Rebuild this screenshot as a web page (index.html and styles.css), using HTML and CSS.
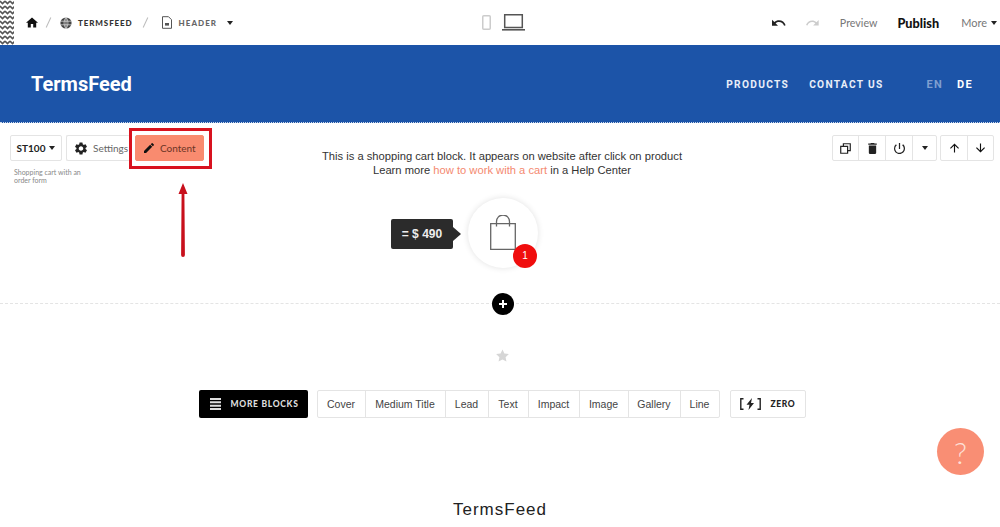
FILE: index.html
```html
<!DOCTYPE html>
<html lang="en">
<head>
    <meta charset="UTF-8">
    <title>TermsFeed - Header</title>
    <link rel="stylesheet" href="styles.css">
</head>
<body>
    <header class="topbar">
        <svg class="zigzag" width="14" height="45">
            <defs>
                <pattern id="zig" width="5" height="5" patternUnits="userSpaceOnUse">
                    <path d="M0 1l2.5 2.5L5 1" fill="none" stroke="#555" stroke-width="1.6"/>
                </pattern>
            </defs>
            <rect width="14" height="45" fill="url(#zig)"/>
        </svg>
        <nav class="crumbs">
            <svg class="ico-home" viewBox="2 3 20 17"><path d="M10 20v-6h4v6h5v-8h3L12 3 2 12h3v8z"/></svg>
            <span class="slash"></span>
            <svg class="ico-globe" viewBox="0 0 12 12">
                <circle cx="6" cy="6" r="5.6" fill="#444"/>
                <path d="M.5 4.2h11M.5 7.8h11M6 .5v11M6 .5C3.4 3.5 3.4 8.5 6 11.5M6 .5c2.6 3 2.6 8 0 11" fill="none" stroke="#fff" stroke-width=".6"/>
            </svg>
            <span class="crumb-text crumb-site">TERMSFEED</span>
            <span class="slash slash-second"></span>
            <svg class="ico-doc" viewBox="0 0 12 13">
                <path d="M1.5.7h6l3 3v8.6h-9z" fill="none" stroke="#555" stroke-width="1"/>
                <path d="M4 7h4v2.6H4z" fill="#555"/>
            </svg>
            <span class="crumb-text crumb-page">HEADER</span>
            <span class="caret caret-page"></span>
        </nav>
        <div class="devices">
            <svg width="9" height="15" viewBox="0 0 9 15"><rect x=".75" y=".75" width="7.5" height="13.5" rx="1" fill="none" stroke="#ccc" stroke-width="1.5"/></svg>
            <svg width="23" height="17" viewBox="0 0 23 17"><path d="M2.7.8h17.6v12.7H2.7z" fill="none" stroke="#555" stroke-width="1.5"/><path d="M0 15h23v1.6H0z" fill="#555"/></svg>
        </div>
        <div class="actions">
            <svg class="ico-undo" viewBox="2 7 21 10"><path d="M12.5 8c-2.65 0-5.05.99-6.9 2.6L2 7v9h9l-3.62-3.62c1.39-1.16 3.16-1.88 5.12-1.88 3.54 0 6.55 2.31 7.6 5.5l2.37-.78C21.08 11.03 17.15 8 12.5 8z"/></svg>
            <svg class="ico-redo" viewBox="1.5 7 21 10"><path d="M18.4 10.6C16.55 8.99 14.15 8 11.5 8c-4.65 0-8.58 3.03-9.96 7.22L3.9 16c1.05-3.19 4.05-5.5 7.6-5.5 1.95 0 3.73.72 5.12 1.88L13 16h9V7l-3.6 3.6z"/></svg>
            <span class="action-preview">Preview</span>
            <span class="action-publish">Publish</span>
            <span class="action-more">More</span>
            <span class="caret"></span>
        </div>
    </header>

    <section class="hero">
        <div class="logo">TermsFeed</div>
        <nav class="hero-nav">
            <a>PRODUCTS</a>
            <a>CONTACT US</a>
        </nav>
        <div class="langs">
            <span class="lang-off">EN</span>
            <span>DE</span>
        </div>
    </section>

    <section class="block">
        <div class="block-left">
            <div class="block-tools">
                <button class="btn btn-code">ST100 <span class="caret"></span></button>
                <button class="btn btn-settings">
                    <svg class="ico-gear" viewBox="2.5 2 19 20"><path d="M19.14 12.94c.04-.3.06-.61.06-.94 0-.32-.02-.64-.07-.94l2.03-1.58a.49.49 0 0 0 .12-.61l-1.92-3.32a.488.488 0 0 0-.59-.22l-2.39.96c-.5-.38-1.03-.7-1.62-.94l-.36-2.54a.484.484 0 0 0-.48-.41h-3.84c-.24 0-.43.17-.47.41l-.36 2.54c-.59.24-1.13.57-1.62.94l-2.39-.96c-.22-.08-.47 0-.59.22L2.74 8.87c-.12.21-.08.47.12.61l2.03 1.58c-.05.3-.09.63-.09.94s.02.64.07.94l-2.03 1.58a.49.49 0 0 0-.12.61l1.92 3.32c.12.22.37.29.59.22l2.39-.96c.5.38 1.03.7 1.62.94l.36 2.54c.05.24.24.41.48.41h3.84c.24 0 .44-.17.47-.41l.36-2.54c.59-.24 1.13-.56 1.62-.94l2.39.96c.22.08.47 0 .59-.22l1.92-3.32c.12-.22.07-.47-.12-.61l-2.01-1.58zM12 15.6c-1.98 0-3.6-1.62-3.6-3.6s1.62-3.6 3.6-3.6 3.6 1.62 3.6 3.6-1.62 3.6-3.6 3.6z"/></svg>
                    Settings
                </button>
                <button class="btn btn-content">
                    <svg class="ico-pencil" viewBox="3 3 18 18"><path d="M3 17.25V21h3.75L17.81 9.94l-3.75-3.75L3 17.25zM20.71 7.04a1 1 0 0 0 0-1.41l-2.34-2.34a1 1 0 0 0-1.41 0l-1.83 1.83 3.75 3.75 1.83-1.83z"/></svg>
                    Content
                </button>
            </div>
            <p class="block-note">Shopping cart with an order form</p>
            <div class="red-box"></div>
            <svg class="red-arrow" width="12" height="74" viewBox="0 0 12 74">
                <path d="M6 0l4.5 11H7.4L7.9 72a1.9 1.9 0 0 1-3.8 0L4.6 11H1.5z" fill="#c8101c"/>
            </svg>
        </div>

        <div class="block-main">
            <p class="cart-text">This is a shopping cart block. It appears on website after click on product<br>
            Learn more <a>how to work with a cart</a> in a Help Center</p>
            <div class="cart">
                <div class="price">= $ 490</div>
                <svg class="bag" width="26" height="35" viewBox="0 0 26 35">
                    <path d="M.7 8.7h24.6v25.6H.7z" fill="none" stroke="#666" stroke-width="1.3"/>
                    <path d="M6.5 11.5V6.5a6 6 0 0 1 13 0v5" fill="none" stroke="#666" stroke-width="1.3"/>
                </svg>
                <div class="badge">1</div>
            </div>
        </div>

        <div class="block-right">
            <div class="tool-group">
                <span class="tool tool-first"><svg class="ico-tool" viewBox="0 0 12 12"><path d="M3.7.8h7.5v7.5H3.7z" fill="none" stroke="#222" stroke-width="1.3"/><path d="M.8 3.7h7.5v7.5H.8z" fill="#fff" stroke="#222" stroke-width="1.3"/></svg></span>
                <span class="tool"><svg class="ico-tool" viewBox="5 3 14 18"><path d="M6 19c0 1.1.9 2 2 2h8c1.1 0 2-.9 2-2V7H6v12zM19 4h-3.5l-1-1h-5l-1 1H5v2h14V4z"/></svg></span>
                <span class="tool"><svg class="ico-tool" viewBox="3 3 18 18"><path d="M13 3h-2v10h2V3zm4.83 2.17-1.42 1.42A6.92 6.92 0 0 1 19 12c0 3.87-3.13 7-7 7A6.995 6.995 0 0 1 7.58 6.58L6.17 5.17A8.932 8.932 0 0 0 3 12c0 4.97 4.03 9 9 9s9-4.03 9-9c0-2.74-1.23-5.18-3.17-6.83z"/></svg></span>
                <span class="tool tool-narrow"><span class="caret"></span></span>
            </div>
            <div class="tool-group">
                <span class="tool tool-move"><svg class="ico-arrow" viewBox="4 4 16 16"><path d="M4 12l1.41 1.41L11 7.83V20h2V7.83l5.58 5.59L20 12l-8-8-8 8z"/></svg></span>
                <span class="tool tool-move"><svg class="ico-arrow ico-down" viewBox="4 4 16 16"><path d="M4 12l1.41 1.41L11 7.83V20h2V7.83l5.58 5.59L20 12l-8-8-8 8z"/></svg></span>
            </div>
        </div>

        <div class="add-block"></div>
    </section>

    <section class="picker">
        <svg class="star" width="13" height="13" viewBox="0 0 24 24"><path d="M12 .8l3.5 7.6 8.3 1-6.1 5.7 1.6 8.2L12 19.2l-7.3 4.1 1.6-8.2L.2 9.4l8.3-1z"/></svg>
        <div class="picker-row">
            <button class="more-blocks">
                <svg width="11" height="12" viewBox="0 0 11 12"><path d="M0 0h11v2H0zM0 3.3h11v2H0zM0 6.7h11v2H0zM0 10h11v2H0z" fill="#ddd"/></svg>
                MORE BLOCKS
            </button>
            <div class="types">
                <span class="type type-cover">Cover</span>
                <span class="type type-medium">Medium Title</span>
                <span class="type type-lead">Lead</span>
                <span class="type type-text">Text</span>
                <span class="type type-impact">Impact</span>
                <span class="type type-image">Image</span>
                <span class="type type-gallery">Gallery</span>
                <span class="type type-line">Line</span>
            </div>
            <button class="zero">
                <svg width="21" height="12" viewBox="0 0 21 12">
                    <path d="M3.5.8H.8v10.4h2.7M17.5.8h2.7v10.4h-2.7" fill="none" stroke="#222" stroke-width="1.4"/>
                    <path d="M12 0L6.5 6.8h3L8.5 12l5.5-7h-3z" fill="#222"/>
                </svg>
                ZERO
            </button>
        </div>
    </section>

    <button class="help">?</button>

    <footer class="footer">TermsFeed</footer>
</body>
</html>
```

FILE: styles.css
```css
* { box-sizing: border-box; }
body { margin: 0; height: 527px; overflow: hidden; background: #fff; font-family: "Liberation Sans", Arial, sans-serif; color: #222; position: relative; }
button { font-family: inherit; cursor: pointer; }
p { margin: 0; }
svg { display: block; flex: none; }

.caret { display: inline-block; width: 0; height: 0; border-left: 3.5px solid transparent; border-right: 3.5px solid transparent; border-top: 4px solid #222; }

/* top bar */
.topbar { height: 45px; display: flex; align-items: center; }
.zigzag { align-self: flex-start; }
.crumbs { display: flex; flex: none; align-items: center; margin-left: 12px; width: 212px; }
.ico-home { width: 12px; height: 11px; fill: #111; }
.slash { flex: none; width: 1px; height: 11px; background: #bbb; transform: rotate(25deg); margin: 0 11px 0 10px; }
.slash-second { margin: 0 15px 0 12px; }
.ico-globe { width: 12px; height: 12px; margin-right: 6px; }
.ico-doc { width: 12px; height: 13px; margin-right: 6px; }
.crumb-text { font-family: "Lato", sans-serif; font-size: 8px; font-weight: 900; letter-spacing: .9px; padding-top: 1px; }
.crumb-site { color: #333; }
.crumb-page { color: #666; letter-spacing: 1.05px; }
.caret-page { margin-left: 10px; }
.devices { display: flex; align-items: center; gap: 11px; margin-left: 244px; }
.actions { display: flex; align-items: center; margin-left: auto; padding-right: 3px; font-family: "Lato", sans-serif; font-size: 10.7px; }
.ico-undo { width: 14px; height: 8px; fill: #222; }
.ico-redo { width: 13px; height: 8px; fill: #ccc; margin-left: 20px; }
.action-preview { color: #777; margin-left: 21px; }
.action-publish { color: #111; font-size: 12.7px; font-weight: 900; margin-left: 20px; }
.action-more { color: #777; font-size: 11px; margin-left: 22px; margin-right: 4px; }

/* blue header of the page */
.hero { height: 78px; background: #1c54a8; color: #fff; display: flex; align-items: center; padding: 1px 27px 0 31px; border-bottom: 1px dotted #cdd9ec; }
.logo { font-family: "Roboto", sans-serif; font-size: 20px; font-weight: 700; margin-right: auto; }
.hero-nav { display: flex; gap: 20px; color: #e8eef8; font-family: "Roboto", sans-serif; font-size: 10.2px; font-weight: 700; letter-spacing: 1.3px; }
.langs { display: flex; gap: 14px; margin-left: 43px; font-family: "Roboto", sans-serif; font-size: 11px; font-weight: 700; letter-spacing: 1.3px; }
.lang-off { color: #7f9fd0; }

/* shopping cart block */
.block { height: 181px; position: relative; display: grid; grid-template-columns: 1fr auto 1fr; padding: 12px 6px 0 10px; border-bottom: 1px dashed #e4e4e4; }
.block-left { position: relative; }
.block-tools { display: flex; }
.btn { height: 26px; display: flex; align-items: center; background: #fff; border: 1px solid #e4e4e4; border-radius: 2px; padding: 0; color: #666; font-family: "Lato", sans-serif; font-size: 10px; }
.btn-code { width: 52px; justify-content: center; gap: 4px; color: #222; font-weight: 700; }
.btn-settings { width: 64px; margin-left: 4px; padding-left: 8px; gap: 6px; border-right: none; }
.ico-gear { width: 12px; height: 13px; fill: #222; }
.btn-content { width: 69px; margin-left: 5px; padding-left: 8px; gap: 6px; background: #f98b6f; border-color: #f98b6f; color: #6b3526; }
.ico-pencil { width: 10px; height: 10px; fill: #111; }
.block-note { width: 76px; margin: 8px 0 0 4px; font-family: "Lato", sans-serif; font-size: 7px; line-height: 7.5px; color: #888; }
.red-box { position: absolute; left: 119px; top: -7px; width: 83px; height: 41px; border: 3px solid #d8121f; }
.red-arrow { position: absolute; left: 167px; top: 48px; }

.block-main { text-align: center; padding-top: 14px; }
.cart-text { font-size: 11.2px; line-height: 14px; color: #333; }
.cart-text a { color: #f4896f; }
.cart { position: relative; width: 70px; height: 70px; margin: 21px 0 0 146px; border-radius: 50%; background: #fff; box-shadow: 0 0 6px rgba(0,0,0,.12); display: flex; align-items: center; justify-content: center; }
.bag { margin-bottom: 1px; }
.price { position: absolute; right: 85px; top: 21px; width: 62px; height: 30px; background: #2b2b2b; border-radius: 2px; color: #eee; font-size: 12px; font-weight: 700; line-height: 30px; }
.price::after { content: ""; position: absolute; left: 62px; top: 8px; border-left: 8px solid #2b2b2b; border-top: 7px solid transparent; border-bottom: 7px solid transparent; }
.badge { position: absolute; left: 45px; top: 46px; width: 24px; height: 24px; border-radius: 50%; background: #f00d0d; color: #fff; font-size: 10px; line-height: 24px; }

.block-right { display: flex; justify-content: flex-end; align-items: flex-start; gap: 3px; }
.tool-group { display: flex; height: 26px; border: 1px solid #e4e4e4; border-radius: 2px; }
.tool { width: 27px; display: flex; align-items: center; justify-content: center; border-left: 1px solid #e4e4e4; }
.tool:first-child { border-left: none; }
.tool-first { width: 25px; }
.tool-narrow { width: 24px; }
.tool-move { width: 26px; }
.ico-tool { width: 11px; height: 11px; fill: #222; }
.ico-arrow { width: 9px; height: 10px; fill: #111; }
.ico-down { transform: rotate(180deg); }
.add-block { position: absolute; left: 492px; top: 170px; width: 22px; height: 22px; border-radius: 50%; background: #000; z-index: 1; }
.add-block::before { content: ""; position: absolute; left: 7px; top: 10px; width: 8px; height: 2px; background: #fff; }
.add-block::after { content: ""; position: absolute; left: 10px; top: 7px; width: 2px; height: 8px; background: #fff; }

/* block picker */
.picker { display: flex; flex-direction: column; align-items: center; padding-top: 45px; }
.star { fill: #d6d6d6; margin-right: -4px; }
.picker-row { display: flex; margin: 28px 0 0 4px; height: 28px; width: 607px; }
.more-blocks { width: 109px; display: flex; align-items: center; gap: 10px; padding: 0 0 0 11px; background: #000; border: none; border-radius: 2px; color: #ddd; font-family: "Lato", sans-serif; font-size: 8.5px; font-weight: 900; letter-spacing: .7px; }
.types { display: flex; margin-left: 9px; border: 1px solid #e4e4e4; border-radius: 2px; }
.type { display: flex; align-items: center; justify-content: center; border-left: 1px solid #e4e4e4; font-size: 10.5px; color: #444; }
.type:first-child { border-left: none; }
.type-cover { width: 47px; }
.type-medium { width: 80px; }
.type-lead { width: 43px; }
.type-text { width: 40px; }
.type-impact { width: 51px; }
.type-image { width: 49px; }
.type-gallery { width: 52px; }
.type-line { width: 39px; }
.zero { width: 76px; margin-left: 10px; display: flex; align-items: center; justify-content: center; gap: 10px; padding: 0; background: #fff; border: 1px solid #e4e4e4; border-radius: 2px; color: #222; font-family: "Lato", sans-serif; font-size: 8.5px; font-weight: 900; letter-spacing: .6px; }

.help { position: absolute; left: 937px; top: 428px; width: 47px; height: 47px; border: none; border-radius: 50%; background: #f98e74; color: #fde0d8; font-family: "Lato", sans-serif; font-size: 30px; font-weight: 300; padding: 0; }

.footer { position: absolute; left: 0; right: 0; top: 500px; text-align: center; font-size: 17px; letter-spacing: 1px; color: #222; }
```
